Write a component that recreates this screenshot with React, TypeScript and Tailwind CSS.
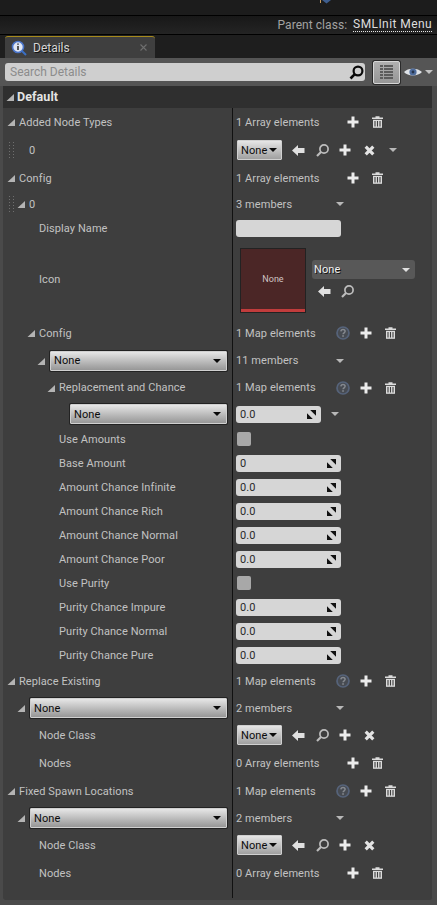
import React from "react";

const Tri = () => (
  <svg width="8" height="8" viewBox="0 0 8 8" className="shrink-0"><path d="M8 1V8H0.5Z" fill="#b4b4b4" /></svg>
);
const Plus = () => (
  <svg width="12" height="12" viewBox="0 0 12 12"><path d="M4.5 0.5h3v4h4v3h-4v4h-3v-4h-4v-3h4z" fill="#ececec" /></svg>
);
const Trash = () => (
  <svg width="11" height="12" viewBox="0 0 11 12">
    <path d="M0 1.6h3.5V0.3h4v1.3H11v1.4H0z" fill="#dcdcdc" />
    <path d="M1 3.8h9v8H1z" fill="#dcdcdc" />
    <path d="M3 5v5.4M5.5 5v5.4M8 5v5.4" stroke="#3e3e3e" strokeWidth="1.1" />
  </svg>
);
const Back = () => (
  <svg width="13" height="11" viewBox="0 0 13 11"><path d="M6 0v3h6.5v5H6v3L0 5.5z" fill="#e0e0e0" /></svg>
);
const Find = () => (
  <svg width="13" height="13" viewBox="0 0 13 13" fill="none">
    <circle cx="8" cy="5" r="4.1" stroke="#bdbdbd" strokeWidth="1.7" />
    <path d="M5 8L1 12" stroke="#bdbdbd" strokeWidth="2.2" />
  </svg>
);
const Cross = () => (
  <svg width="11" height="11" viewBox="0 0 11 11"><path d="M1.7 1.7L9.3 9.3M9.3 1.7L1.7 9.3" stroke="#e4e4e4" strokeWidth="3.2" /></svg>
);
const Down = () => (
  <svg width="8" height="4" viewBox="0 0 8 4"><path d="M0 0h8L4 4z" fill="#b8b8b8" /></svg>
);
const Help = () => (
  <svg width="14" height="14" viewBox="0 0 14 14" fill="none">
    <circle cx="7" cy="7" r="6" stroke="#56637a" strokeWidth="1.7" fill="#474b52" />
    <path d="M4.9 5.4C5 4 6 3.5 7 3.5c1.3 0 2.1.8 2.1 1.8 0 1.5-2 1.5-2 3" stroke="#85898f" strokeWidth="1.5" />
    <path d="M6.2 9.3h1.7v1.5H6.2z" fill="#85898f" />
  </svg>
);
const Spin = () => (
  <svg width="9" height="9" viewBox="0 0 9 9"><path d="M3.2 0H9v5.8zM0 3.2V9h5.8z" fill="#111" /></svg>
);
const Grip = () => (
  <div className="grid grid-cols-2 gap-x-[2px] gap-y-[2px] w-[5px] shrink-0">
    {Array.from({ length: 12 }).map((_, i) => (
      <span key={i} className="block w-[1px] h-[1px] bg-[#6f6f6f]" />
    ))}
  </div>
);

const ComboCaret = () => (
  <svg width="8" height="4" viewBox="0 0 8 4" className="shrink-0"><path d="M0 0h8L4 4z" fill="#0a0a0a" /></svg>
);

const Combo = ({ wide }: { wide: boolean }) =>
  wide ? (
    <div className="flex-1 h-[20px] flex items-center justify-between pl-[3px] pr-[5px] rounded-[1px] border border-[#d0d0d0] bg-gradient-to-b from-[#e6e6e6] to-[#979797] text-[#0c0c0c] shadow-[0_0_0_1px_#222]">
      <span>None</span>
      <ComboCaret />
    </div>
  ) : (
    <div className="w-[45px] h-[20px] flex items-center justify-between pl-[3px] pr-[4px] rounded-[1px] border border-[#d0d0d0] bg-gradient-to-b from-[#e6e6e6] to-[#a0a0a0] text-[#0c0c0c] shrink-0">
      <span>None</span>
      <ComboCaret />
    </div>
  );

const Num = ({ v }: { v: string }) => (
  <div className="w-[105px] h-[17px] rounded-[3px] bg-[#d6d6d6] text-[#2a2a2a] flex items-center justify-between pl-[4px] pr-[5px]">
    <span>{v}</span>
    <Spin />
  </div>
);

const Check = () => <div className="w-[14px] h-[14px] ml-[1px] rounded-[2px] bg-[#a8a8a8]" />;

const ArrayVal = ({ t }: { t: string }) => (
  <div className="flex items-center">
    <span className="w-[111px]">{t}</span>
    <Plus />
    <span className="w-[13px]" />
    <Trash />
  </div>
);
const MapVal = ({ t = "1 Map elements" }: { t?: string }) => (
  <div className="flex items-center">
    <span className="w-[100px]">{t}</span>
    <Help />
    <span className="w-[10px]" />
    <Plus />
    <span className="w-[13px]" />
    <Trash />
  </div>
);
const Members = ({ t }: { t: string }) => (
  <div className="flex items-center">
    <span className="w-[100px]">{t}</span>
    <Down />
  </div>
);
const ClassPick = ({ more }: { more?: boolean }) => (
  <div className="flex items-center pl-[1px]">
    <Combo wide={false} />
    <span className="w-[10px]" />
    <Back />
    <span className="w-[11px]" />
    <Find />
    <span className="w-[10px]" />
    <Plus />
    <span className="w-[13px]" />
    <Cross />
    {more && <span className="w-[14px]" />}
    {more && <Down />}
  </div>
);

const Row = ({ h, left, right, pad }: { h: string; left: React.ReactNode; right: React.ReactNode; pad: string }) => (
  <div className={`flex ${h}`}>
    <div className={`w-[230px] shrink-0 flex items-center border-r border-[#111] pr-[5px] ${pad}`}>{left}</div>
    <div className="flex-1 flex items-center pl-[3px] min-w-0">{right}</div>
  </div>
);

const Tree = ({ t }: { t: string }) => (
  <div className="flex items-center gap-[4px]">
    <Tri />
    <span>{t}</span>
  </div>
);
const TreeCombo = () => (
  <div className="flex items-center gap-[5px] flex-1">
    <Tri />
    <Combo wide />
  </div>
);

const props: [string, React.ReactNode][] = [
  ["Base Amount", <Num v="0" />],
  ["Amount Chance Infinite", <Num v="0.0" />],
  ["Amount Chance Rich", <Num v="0.0" />],
  ["Amount Chance Normal", <Num v="0.0" />],
  ["Amount Chance Poor", <Num v="0.0" />],
  ["Use Purity", <Check />],
  ["Purity Chance Impure", <Num v="0.0" />],
  ["Purity Chance Normal", <Num v="0.0" />],
  ["Purity Chance Pure", <Num v="0.0" />],
];

export default function App() {
  return (
    <div className="w-[437px] h-[905px] overflow-hidden bg-[#4a4a4a] flex flex-col text-[11px] leading-none text-[#c2c2c2] font-['Roboto','Liberation_Sans',sans-serif] tracking-[0.08px]">
      <div className="h-[16px] shrink-0 bg-[#1c1c1c] border-b border-black relative">
        <svg width="14" height="4" viewBox="0 0 14 4" className="absolute left-[320px] top-0">
          <path d="M0 0h1v3H0z" fill="#c69a5a" />
          <path d="M2 0h9L6.5 3.5z" fill="#3e5e8e" />
        </svg>
      </div>
      <div className="h-[19px] shrink-0 bg-gradient-to-b from-[#181818] to-[#242424] border-b border-black flex items-center justify-end pr-[5px] text-[12px]">
        <span className="text-[#a2a2a2] mr-[6px] tracking-[0.05px]">Parent class:</span>
        <span className="text-[#dedede] border-b border-dotted border-[#e8e8e8] leading-[13px] tracking-[0.42px]">SMLInit Menu</span>
      </div>
      <div className="h-[23px] shrink-0 bg-[#1e1e1e] pl-[5px] flex items-end">
        <div className="w-[150px] h-[22px] bg-[#3f3f3f] border-t border-[#a68a1c] rounded-t-[3px] flex items-center pl-[6px] pr-[8px] text-[12px] text-[#d4d4d4] tracking-normal">
          <svg width="16" height="16" viewBox="0 0 16 16" fill="none" className="shrink-0">
            <circle cx="7" cy="7" r="5.5" fill="#dfe6f4" stroke="#4a74c8" strokeWidth="1.6" />
            <path d="M7 3.5v1.3M7 6v4" stroke="#333" strokeWidth="1.6" />
            <path d="M11 11l4 4" stroke="#3a6fc4" strokeWidth="2" />
          </svg>
          <span className="ml-[6px] flex-1 [text-shadow:1px_1px_0_#111]">Details</span>
          <svg width="7" height="7" viewBox="0 0 7 7"><path d="M0.5 0.5l6 6M6.5 0.5l-6 6" stroke="#6f6f6f" strokeWidth="1.1" /></svg>
        </div>
      </div>
      <div className="h-[28px] shrink-0 bg-[#555555] flex items-center pl-[5px]">
        <div className="w-[360px] h-[18px] rounded-[3px] bg-[#cfcfcf] flex items-center justify-between pl-[5px] pr-[1px] text-[12px] text-[#8c8c8c] tracking-normal">
          <span>Search Details</span>
          <svg width="15" height="15" viewBox="0 0 15 15" fill="none">
            <circle cx="9" cy="6" r="4.4" stroke="#0a0a0a" strokeWidth="2.2" />
            <path d="M5.8 9.2L1.5 13.5" stroke="#0a0a0a" strokeWidth="2.6" />
          </svg>
        </div>
        <div className="w-[27px] h-[23px] ml-[8px] rounded-[2px] border border-[#d6d6d6] shadow-[0_0_0_1px_#2a2a2a] bg-gradient-to-b from-[#b0b0b0] to-[#969696] flex items-center justify-center">
          <div className="grid grid-cols-[3px_9px] gap-[1px]">
            {Array.from({ length: 10 }).map((_, i) => (
              <span key={i} className="block h-[2px] bg-[#5c5c5c]" />
            ))}
          </div>
        </div>
        <svg width="18" height="12" viewBox="0 0 18 12" className="ml-[4px]">
          <path d="M0 6C3.5 1.5 14 1.5 18 6 14 10.5 3.5 10.5 0 6z" fill="#dfe3e8" />
          <circle cx="9" cy="6" r="3.6" fill="#4e6c9c" />
          <circle cx="9" cy="6" r="1.4" fill="#26344c" />
        </svg>
        <svg width="8" height="4" viewBox="0 0 8 4" className="ml-[3px]"><path d="M0 0h8L4 4z" fill="#c4c4c4" /></svg>
      </div>
      <div className="ml-[3px] mr-[4px] h-[814px] shrink-0 rounded-b-[3px] bg-[#3e3e3e] flex flex-col border-r border-[#4a4a4a]">
        <div className="h-[22px] shrink-0 bg-[#2f2f2f] flex items-center pl-[3px] gap-[3px] text-[12.5px] font-bold text-[#e4e4e4]">
          <Tri />
          <span>Default</span>
        </div>
        <Row h="h-[28px]" pad="pl-[4px]" left={<Tree t="Added Node Types" />} right={<ArrayVal t="1 Array elements" />} />
        <Row h="h-[28px]" pad="pl-[6px]" left={<div className="flex items-center"><Grip /><span className="ml-[15px]">0</span></div>} right={<ClassPick more />} />
        <Row h="h-[28px]" pad="pl-[4px]" left={<Tree t="Config" />} right={<ArrayVal t="1 Array elements" />} />
        <Row h="h-[24px]" pad="pl-[6px]" left={<div className="flex items-center"><Grip /><span className="ml-[3px]"><Tri /></span><span className="ml-[4px]">0</span></div>} right={<Members t="3 members" />} />
        <Row h="h-[24px]" pad="pl-[36px]" left="Display Name" right={<div className="w-[105px] h-[17px] rounded-[3px] bg-[#d6d6d6]" />} />
        <Row
          h="h-[79px]"
          pad="pl-[36px]"
          left="Icon"
          right={
            <div className="flex items-center mt-[2px]">
              <div className="ml-[4px] w-[66px] h-[65px] bg-[#4b2626] border border-[#222] flex flex-col shrink-0">
                <div className="flex-1 flex items-center justify-center text-[9px] tracking-normal text-[#d0c4c4]">None</div>
                <div className="h-[3px] bg-[#c13c3c]" />
              </div>
              <div className="ml-[6px] mb-[3px] flex flex-col">
                <div className="w-[103px] h-[19px] rounded-[3px] bg-[#585858] flex items-center justify-between pl-[2px] pr-[5px] text-[11px] text-[#f0f0f0] [text-shadow:1px_1px_0_#111]">
                  <span>None</span>
                  <svg width="8" height="4" viewBox="0 0 8 4"><path d="M0 0h8L4 4z" fill="#e0e0e0" /></svg>
                </div>
                <div className="flex items-center pl-[6px] mt-[6px]">
                  <Back />
                  <span className="w-[10px]" />
                  <Find />
                </div>
              </div>
            </div>
          }
        />
        <Row h="h-[28px]" pad="pl-[24px]" left={<Tree t="Config" />} right={<MapVal />} />
        <Row h="h-[27px]" pad="pl-[34px]" left={<TreeCombo />} right={<Members t="11 members" />} />
        <Row h="h-[27px]" pad="pl-[44px]" left={<Tree t="Replacement and Chance" />} right={<MapVal />} />
        <Row
          h="h-[26px]"
          pad="pl-[67px]"
          left={<Combo wide />}
          right={
            <div className="flex items-center">
              <div className="w-[85px] h-[17px] rounded-[3px] bg-[#d6d6d6] text-[#2a2a2a] flex items-center justify-between pl-[4px] pr-[5px]">
                <span>0.0</span>
                <Spin />
              </div>
              <span className="w-[10px]" />
              <Down />
            </div>
          }
        />
        <Row h="h-[24px]" pad="pl-[56px]" left="Use Amounts" right={<Check />} />
        {props.map(([l, r]) => (
          <Row key={l} h="h-[24px]" pad="pl-[56px]" left={l} right={r} />
        ))}
        <Row h="h-[28px]" pad="pl-[4px]" left={<Tree t="Replace Existing" />} right={<MapVal />} />
        <Row h="h-[26px]" pad="pl-[14px]" left={<TreeCombo />} right={<Members t="2 members" />} />
        <Row h="h-[28px]" pad="pl-[36px]" left="Node Class" right={<ClassPick />} />
        <Row h="h-[28px]" pad="pl-[36px]" left="Nodes" right={<ArrayVal t="0 Array elements" />} />
        <Row h="h-[28px]" pad="pl-[4px]" left={<Tree t="Fixed Spawn Locations" />} right={<MapVal />} />
        <Row h="h-[26px]" pad="pl-[14px]" left={<TreeCombo />} right={<Members t="2 members" />} />
        <Row h="h-[28px]" pad="pl-[36px]" left="Node Class" right={<ClassPick />} />
        <Row h="h-[28px]" pad="pl-[36px]" left="Nodes" right={<ArrayVal t="0 Array elements" />} />
        <Row h="h-[11px]" pad="" left={null} right={null} />
      </div>
    </div>
  );
}
